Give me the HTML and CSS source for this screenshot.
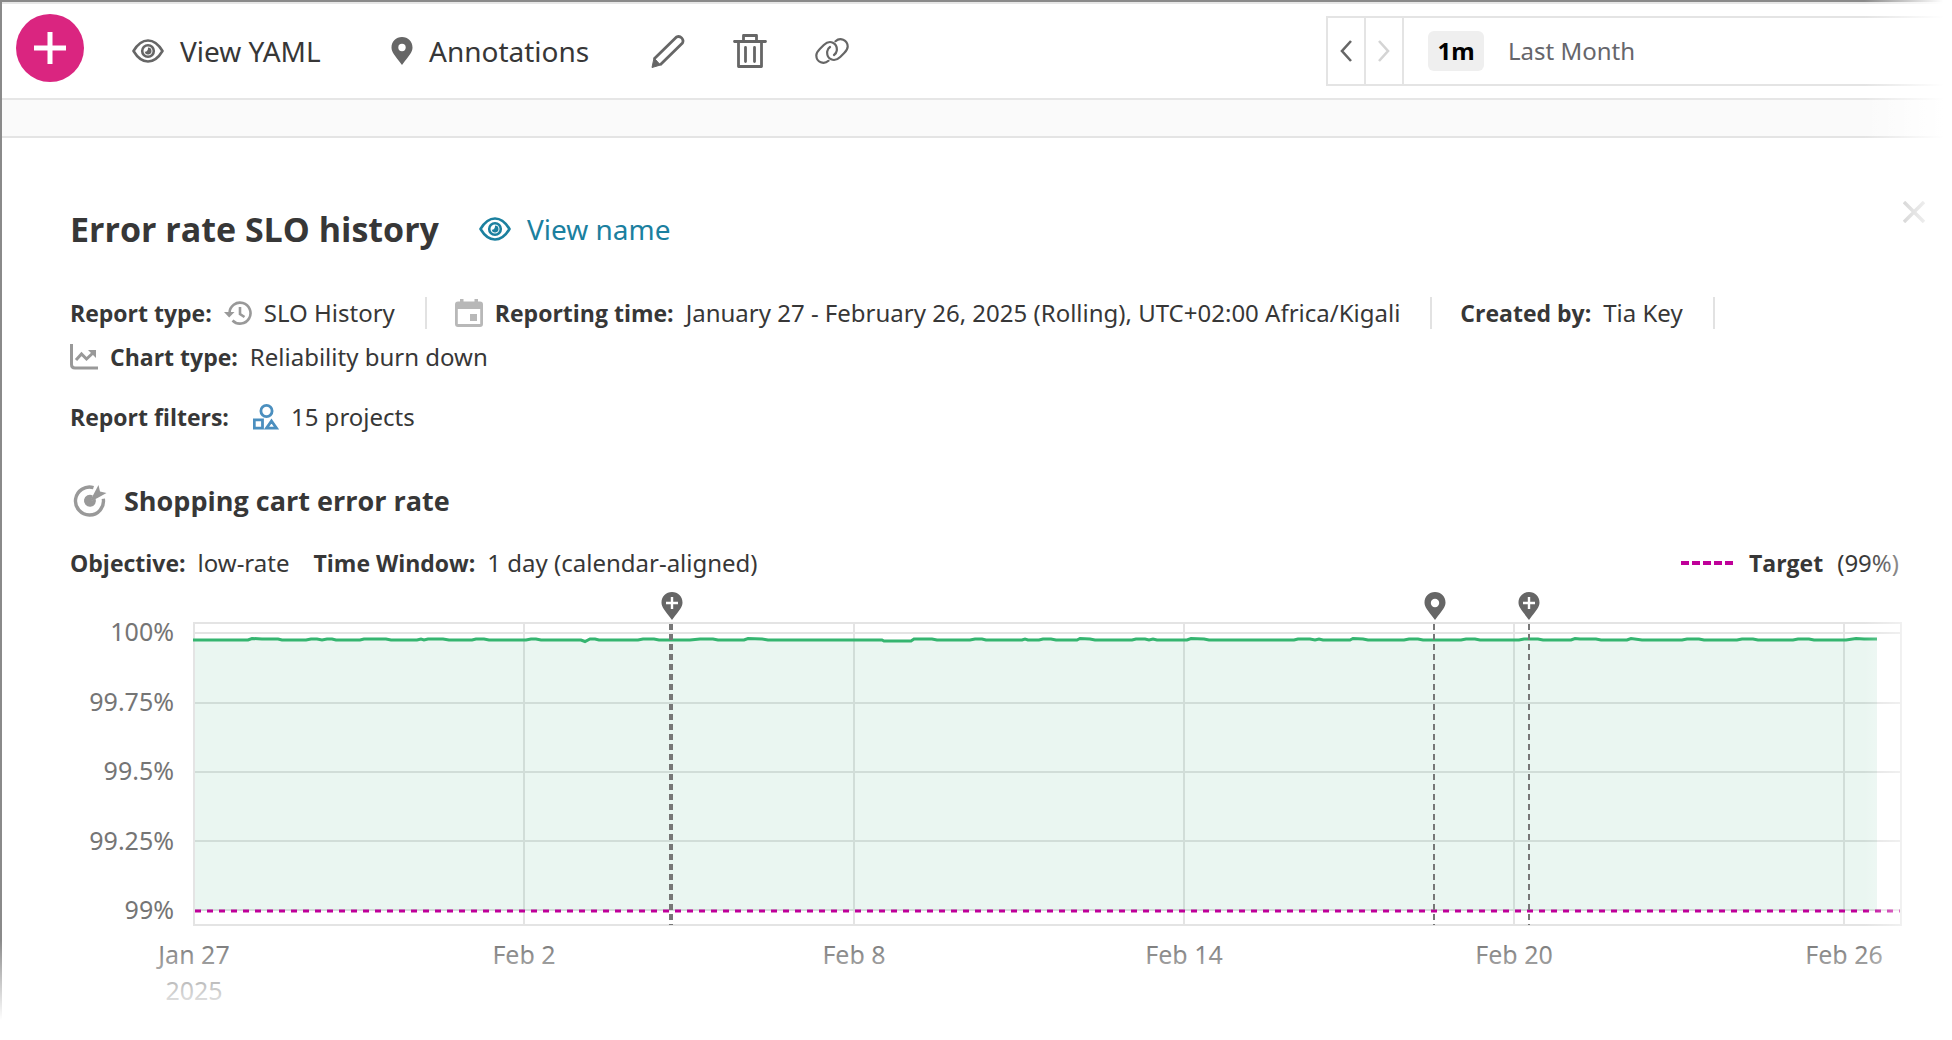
FILE: index.html
```html
<!DOCTYPE html>
<html lang="en">
<head>
<meta charset="utf-8">
<title>Error rate SLO history</title>
<link rel="stylesheet" href="styles.css">
</head>
<body>
<svg class="sprite" aria-hidden="true">
  <symbol id="eye" viewBox="0 0 32 24">
    <path d="M1.5 12C6 4.500 10 1.500 16 1.500S26 4.500 30.500 12C26 19.500 22 22.500 16 22.500S6 19.500 1.500 12Z" fill="none" stroke="currentColor" stroke-width="2.600" stroke-linejoin="round"/>
    <circle cx="16" cy="12" r="5.800" fill="none" stroke="currentColor" stroke-width="2.600"/>
    <path d="M16 8.500a3.500 3.500 0 1 1-3.400 4.300c2 .4 3.700-1.600 3.400-4.300Z" fill="currentColor"/>
  </symbol>
  <symbol id="pin-plus" viewBox="0 0 22 28">
    <path d="M11 0C5 0 .5 4.500.5 10.500.5 15 3.500 18 11 28 18.500 18 21.500 15 21.500 10.500 21.500 4.500 17 0 11 0Z" fill="currentColor"/>
    <path d="M11 5v12M5 11h12" stroke="#fff" stroke-width="2.400"/>
  </symbol>
  <symbol id="pin-dot" viewBox="0 0 22 28">
    <path d="M11 0C5 0 .5 4.500.5 10.500.5 15 3.500 18 11 28 18.500 18 21.500 15 21.500 10.500 21.500 4.500 17 0 11 0Z" fill="currentColor"/>
    <circle cx="11" cy="11" r="4.200" fill="#fff"/>
  </symbol>
</svg>

<main class="page">
  <header class="toolbar">
    <button class="add" aria-label="Add"><svg width="34" height="34" viewBox="0 0 34 34"><path d="M17 1v32M1 17h32" stroke="#fff" stroke-width="5"/></svg></button>
    <button class="action yaml"><svg width="32" height="24"><use href="#eye"/></svg>View YAML</button>
    <button class="action notes"><svg width="22" height="28" viewBox="0 0 22 28"><path d="M11 0C5 0 .5 4.500.5 10.500.5 15 3.500 18 11 28 18.500 18 21.500 15 21.500 10.500 21.500 4.500 17 0 11 0Z" fill="currentColor"/><circle cx="11" cy="10.500" r="3.700" fill="#fff"/></svg>Annotations</button>
    <div class="icons">
      <button aria-label="Edit"><svg width="34" height="34" viewBox="0 0 34 34" fill="none" stroke="currentColor" stroke-width="2.800" stroke-linejoin="round"><path d="M3 25 25.500 3a4.500 4.500 0 0 1 6 6L9 31"/><path d="M3 24 9.500 31 1 33.500Z" fill="currentColor" stroke-width="1"/></svg></button>
      <button aria-label="Delete"><svg width="34" height="34" viewBox="0 0 34 34" fill="none" stroke="currentColor" stroke-width="2.800" stroke-linecap="round" stroke-linejoin="round"><path d="M1.500 7.500h31M10.500 7V1.500h13V7M5.500 8v24.500h23V8M12.500 13.500v14M21.500 13.500v14"/></svg></button>
      <button aria-label="Copy link"><svg width="34" height="28" viewBox="0 0 34 28" fill="none" stroke="currentColor" stroke-width="2.200" stroke-linecap="round"><path d="M13.500 23.800C9 28 1.500 25.500 1.300 18.500c0-3 1.500-4.500 3.500-6.500l4-4C15 2 22.500 6 21.800 13.500c-.3 2-1.300 3.500-2.800 4.500"/><path d="M20.500 4.200C25 0 32.500 2.500 32.700 9.500c0 3-1.500 4.500-3.500 6.500l-4 4C19 26 11.500 22 12.200 14.500c.3-2 1.300-3.500 2.800-4.500"/></svg></button>
    </div>
    <div class="range">
      <button class="step" aria-label="Previous period"><svg width="12" height="22" viewBox="0 0 12 22"><path d="M11 1 2 11l9 10" fill="none" stroke="currentColor" stroke-width="2.600"/></svg></button>
      <button class="step next" aria-label="Next period"><svg width="12" height="22" viewBox="0 0 12 22"><path d="m1 1 9 10L1 21" fill="none" stroke="currentColor" stroke-width="2.600"/></svg></button>
      <button class="period"><span class="badge">1m</span>Last Month</button>
    </div>
  </header>
  <div class="band"></div>

  <article class="report">
    <header class="head">
      <h1>Error rate SLO history</h1>
      <a class="view" href="#"><svg width="32" height="24"><use href="#eye"/></svg>View name</a>
      <button class="close" aria-label="Close"><svg width="22" height="22" viewBox="0 0 22 22"><path d="m1 1 20 20M21 1 1 21" stroke="currentColor" stroke-width="3.400"/></svg></button>
    </header>

    <ul class="meta">
      <li><b>Report type:</b><svg class="muted" width="28" height="24" viewBox="0 0 28 24" fill="none" stroke="currentColor" stroke-width="2.600"><path d="M5.500 12A10.500 10.500 0 1 1 8.500 19.500"/><path d="M0 11h10.500L5.200 16.500Z" fill="currentColor" stroke="none"/><path d="M16 6v7l4.500 3"/></svg>SLO History</li>
      <li><svg class="pale" width="28" height="28" viewBox="0 0 28 28"><path d="M3 2.500h2V0h3.500v2.500h11V0H23v2.500h2a3 3 0 0 1 3 3V25a3 3 0 0 1-3 3H3a3 3 0 0 1-3-3V5.500a3 3 0 0 1 3-3ZM2.800 10v15h22.400V10ZM15 15h7v7h-7Z" fill="currentColor" fill-rule="evenodd"/></svg><b>Reporting time:</b>January 27 - February 26, 2025 (Rolling), UTC+02:00 Africa/Kigali</li>
      <li><b>Created by:</b>Tia Key</li>
      <li><svg class="muted" width="28" height="26" viewBox="0 0 28 26" fill="none" stroke="currentColor" stroke-width="3"><path d="M1.500 0v20.500q0 3.500 3.500 3.500H28"/><path d="m6 16 5.500-6 5 5L24 8"/><path d="M18 6h8v8Z" fill="currentColor" stroke="none"/></svg><b>Chart type:</b>Reliability burn down</li>
    </ul>
    <div class="filters"><b>Report filters:</b><svg class="blue" width="26" height="26" viewBox="0 0 26 26" fill="none" stroke="currentColor" stroke-width="2.800"><circle cx="13.500" cy="7" r="5.600"/><path d="M1.300 15.800h8.200v8.400H1.300ZM18.500 17l5 7.200h-10Z"/></svg>15 projects</div>

    <section class="slo">
      <h2><svg class="muted" width="34" height="34" viewBox="0 0 34 34"><path d="M20.500 3.600A14 14 0 1 0 30.300 14.800" fill="none" stroke="currentColor" stroke-width="3.400"/><path d="M19.800 11.500A6 6 0 1 0 22.500 14.500L18 17Z" fill="currentColor"/><path d="m16.500 18 9-17 1.500 6.500 6.500 1.500-9 5Z" fill="currentColor"/></svg>Shopping cart error rate</h2>
      <div class="info">
        <span><b>Objective:</b>low-rate</span>
        <span><b>Time Window:</b>1 day (calendar-aligned)</span>
        <span class="legend"><svg width="52" height="4" viewBox="0 0 52 4"><path d="M0 2h52" stroke="#bf0099" stroke-width="4" stroke-dasharray="8 3"/></svg><b>Target</b>(99%)</span>
      </div>

      <div class="chart">
        <ul class="yaxis"><li>100%</li><li>99.75%</li><li>99.5%</li><li>99.25%</li><li>99%</li></ul>
        <div class="plot">
          <svg class="canvas" viewBox="193 622 1709 304" preserveAspectRatio="none">
            <g stroke="#e4e4e4" stroke-width="2" fill="none">
              <path d="M193 633H1901M193 703H1901M193 772H1901M193 841H1901M193 910H1901"/>
              <path d="M524 623V925M854 623V925M1184 623V925M1514 623V925M1844 623V925"/>
              <path d="M194 623H1901V925H194Z"/>
            </g>
            <path d="M195 640H1877V911H195Z" fill="#22a46a" fill-opacity=".095"/>
            <path d="M193 640H248L252 638.500 262 639H278L282 640H306L311 639H317L322 640 327 639H332L336 640H360L364 639H386L391 640H417L421 639 424 640 428 639H443L449 640H472L476 639H484L489 640H526L531 639H536L541 640H581L585 641.500 590 639H595L599 640H638L643 639H654L659 640H690L700 639H713L718 640H744L748 638.500 762 639 768 640H882L884 641H911L914 639H932L937 640H970L975 639H982L986 640H1022L1025 639 1028 640H1039L1043 639H1051L1056 640H1077L1080 638.500 1090 639 1095 640H1132L1136 639H1145L1149 640 1153 639 1157 640H1187L1191 638.500 1204 639 1209 640H1294L1298 639H1310L1315 640 1319 639 1323 640H1350L1353 638.500 1363 639 1368 640H1404L1409 639H1418L1423 640H1461L1466 639H1475L1480 640H1519L1524 639H1538L1543 640H1571L1575 638.500 1580 639H1596L1601 640H1627L1631 638.500 1642 640H1682L1687 639H1699L1704 640H1737L1742 639H1753L1758 640H1793L1798 639H1809L1814 640H1846L1856 638.500 1864 639H1877" fill="none" stroke="#35b570" stroke-width="3"/>
            <path d="M195 911H1900" stroke="#bf0099" stroke-width="3" stroke-dasharray="6 6"/>
            <g stroke="#777" stroke-dasharray="6 4">
              <path d="M671 624V925" stroke-width="4"/>
              <path d="M1434 624V925M1529 624V925" stroke-width="2"/>
            </g>
          </svg>
          <svg class="pin" style="left:28%" width="22" height="28"><use href="#pin-plus"/></svg>
          <svg class="pin" style="left:72.700%" width="22" height="28"><use href="#pin-dot"/></svg>
          <svg class="pin" style="left:78.200%" width="22" height="28"><use href="#pin-plus"/></svg>
        </div>
        <ul class="xaxis"><li>Jan 27<span>2025</span></li><li>Feb 2</li><li>Feb 8</li><li>Feb 14</li><li>Feb 20</li><li>Feb 26</li></ul>
      </div>
    </section>
  </article>
</main>
</body>
</html>
```
FILE: styles.css
```css
* { box-sizing: border-box; }
body { position: relative; margin: 0; background: #fff; color: #373737; font: 400 24px/36px "Noto Sans", "Open Sans", sans-serif; }
button { margin: 0; padding: 0; border: 0; background: none; color: inherit; font: inherit; cursor: pointer; }
ul { margin: 0; padding: 0; list-style: none; }
svg { display: block; flex: none; }
b, h1, h2 { font-family: "Open Sans", "Noto Sans", sans-serif; font-weight: 700; }
b { font-size: 23px; }
h1, h2 { margin: 0; }
.sprite { position: absolute; width: 0; height: 0; }

.page { min-height: 100vh; overflow: hidden; border: solid #8a8a8a; border-width: 2px 0 0 2px; }
/* The page fades out towards its right and bottom edges. */
body::before, body::after { content: ""; position: absolute; z-index: 2; right: 0; bottom: 0; pointer-events: none; }
body::before { top: 0; width: 88px; background: linear-gradient(to right, #fff0, #fff 90%); }
body::after { left: 0; height: 100px; background: linear-gradient(#fff0, #fff 80%); }

.toolbar { display: flex; align-items: center; height: 98px; padding-left: 14px; border: solid #e6e6e6; border-width: 2px 0; }
.add { display: grid; place-items: center; width: 68px; height: 68px; margin-bottom: 6px; border-radius: 50%; background: #da2580; }
.action { display: flex; align-items: center; font-size: 28px; white-space: nowrap; }
.action svg, .icons { color: #666; }
.yaml { width: 212px; gap: 16px; margin-left: 48px; }
.notes { gap: 16px; margin-left: 47px; }
.icons { display: flex; align-items: center; gap: 48px; margin-left: 62px; }
.range { display: flex; width: 626px; height: 70px; margin-left: auto; border: 2px solid #e4e4e4; border-right: 0; }
.step { display: grid; place-items: center; width: 38px; border-right: 2px solid #e4e4e4; color: #666; }
.next { color: #d4d4d4; }
.period { display: flex; flex: 1; align-items: center; gap: 24px; padding-left: 24px; color: #66666b; }
.badge { width: 56px; border-radius: 6px; background: #efefef; color: #000; line-height: 40px; font-weight: 700; }
.band { height: 38px; border-bottom: 2px solid #e4e4e4; background: #fafafa; }

.report { padding: 63px 27px 0 68px; }
.head { display: flex; align-items: flex-start; }
h1 { padding-top: 4px; font-size: 34px; line-height: 48px; }
.view { display: flex; align-items: center; gap: 16px; margin: 4px 0 0 40px; color: #1b809f; font-size: 28px; line-height: 48px; text-decoration: none; }
.close { margin-left: auto; color: #b4b4b4; }

.meta { display: flex; flex-wrap: wrap; margin-top: 38px; }
.meta li { display: flex; align-items: center; gap: 12px; height: 44px; }
.meta li:not(:last-child) { margin-right: 28px; }
.meta li:not(:last-child)::after { content: ""; width: 2px; height: 32px; margin-left: 18px; background: #e2e2e2; }
.muted { color: #999; }
.pale { color: #b8b8b8; }
.blue { color: #4b8fbf; }
.filters { display: flex; align-items: center; gap: 12px; height: 44px; margin-top: 16px; }
.filters b { margin-right: 12px; }

.slo { margin-right: 23px; }
h2 { display: flex; align-items: center; gap: 17px; height: 44px; margin-top: 40px; padding-left: 3px; font-size: 27px; }
.info { display: flex; gap: 24px; margin-top: 22px; }
.info span { display: flex; align-items: center; gap: 12px; }
.info .legend { margin: 0 3px 0 auto; gap: 14px; }
.legend b { margin-left: 2px; }

.chart { display: grid; grid-template-columns: 123px 1fr; margin-top: 41px; color: #757575; font-size: 25px; }
.yaxis { display: flex; flex-direction: column; justify-content: space-between; height: 314px; padding-right: 19px; margin-top: -9px; text-align: right; }
.plot { position: relative; height: 304px; }
.canvas { width: 100%; height: 304px; }
.pin { position: absolute; top: -30px; margin-left: -11px; color: #666; }
.xaxis { grid-column: 2; display: grid; grid-template-columns: repeat(6, 19.31%); margin-top: 9px; }
.xaxis li { display: flex; flex-direction: column; align-items: center; width: 2px; white-space: nowrap; }
```
